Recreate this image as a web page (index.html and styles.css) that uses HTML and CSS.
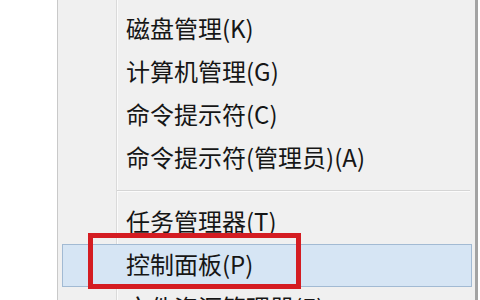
FILE: index.html
```html
<!DOCTYPE html>
<html lang="zh-CN">
<head>
<meta charset="utf-8">
<title>Win+X 菜单</title>
<link rel="stylesheet" href="styles.css">
</head>
<body>
<div class="screen">
  <div class="desk"></div>
  <div class="menu">
    <ul class="items">
      <li class="item">磁盘管理(K)</li>
      <li class="item">计算机管理(G)</li>
      <li class="item">命令提示符(C)</li>
      <li class="item">命令提示符(管理员)(A)</li>
      <li class="sep"></li>
      <li class="item">任务管理器(T)</li>
      <li class="item hover">控制面板(P)<span class="mark"></span></li>
      <li class="item">文件资源管理器(E)</li>
    </ul>
  </div>
  <div class="edge"></div>
</div>
</body>
</html>
```

FILE: styles.css
```css
html, body {
  margin: 0;
  padding: 0;
  background: #ffffff;
}

.screen {
  width: 480px;
  height: 300px;
  overflow: hidden;
  display: flex;
  font-family: "Noto Sans CJK SC", "Noto Sans", sans-serif;
}

.desk {
  width: 57px;
  flex: none;
  background: #ffffff;
}

.menu {
  flex: 1;
  border-left: 1px solid #c9c9c9;
  border-right: 3px solid #a3a3a3;
  background-color: #f0f0f0;
  background-image: linear-gradient(to right,
    transparent 58px, #dadada 58px, #dadada 59px,
    #fbfbfb 59px, #fbfbfb 60px, transparent 60px);
  padding-top: 8px;
}

.items {
  list-style: none;
  margin: 0;
  padding: 0;
}

.item {
  position: relative;
  height: 43px;
  line-height: 38px;
  margin: 0 3px 0 4px;
  padding-left: 63px;
  font-size: 24px;
  color: #161616;
  white-space: nowrap;
  box-sizing: border-box;
  border: 1px solid transparent;
}

.item.hover {
  background: #d6e5f4;
  border-color: #a2bad3;
}

.sep {
  height: 21px;
  margin-left: 59px;
  margin-right: 5px;
  background-image: linear-gradient(to bottom,
    transparent 10px, #d5d5d5 10px, #d5d5d5 11px,
    #fbfbfb 11px, #fbfbfb 12px, transparent 12px);
}

.mark {
  position: absolute;
  left: 25px;
  top: -12px;
  width: 213px;
  height: 56px;
  box-sizing: border-box;
  border: 5px solid #d41c22;
}

.edge {
  width: 2px;
  flex: none;
  background: #ffffff;
}
```
